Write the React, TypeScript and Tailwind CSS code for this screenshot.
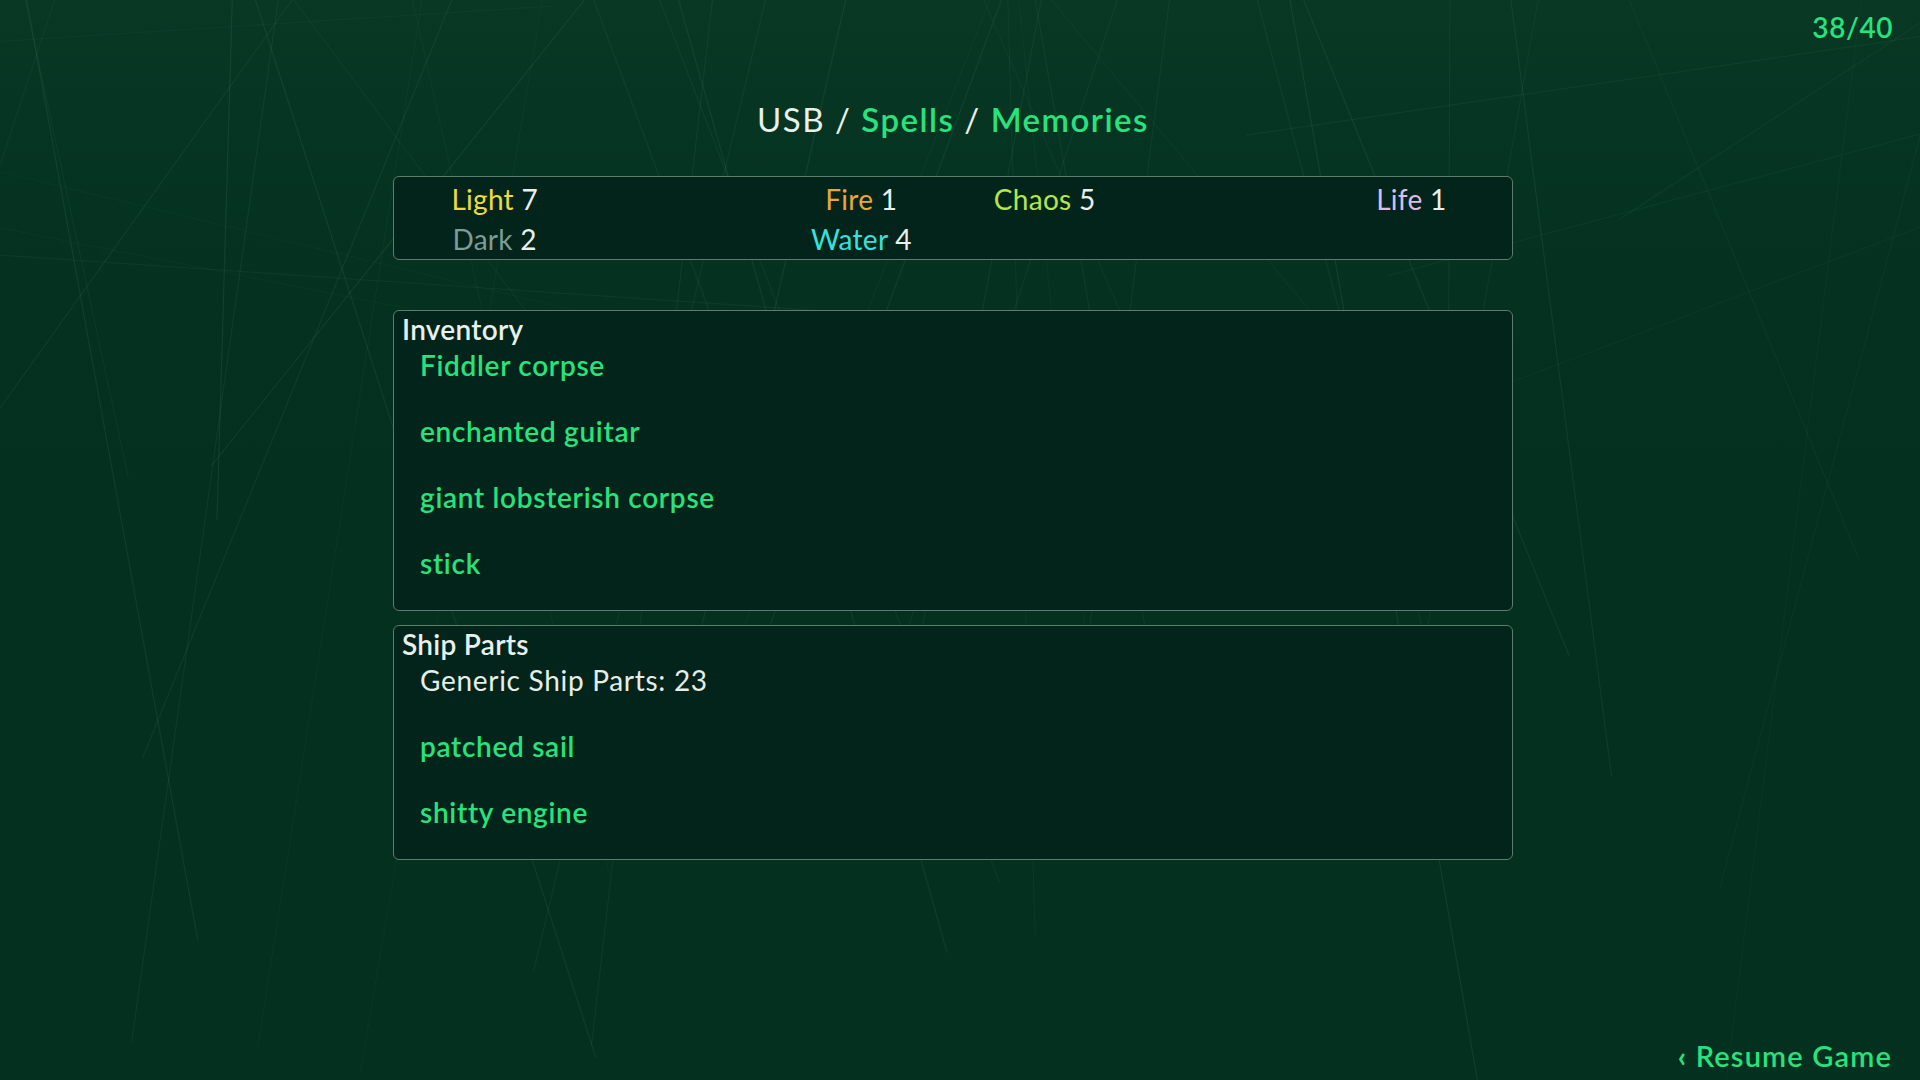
import React from "react";

// Faint thin strokes in the backdrop, generated from a fixed seed so they stay put.
function makeStrokes() {
  let s = 7654321;
  const rnd = () => {
    s = (s * 1103515245 + 12345) % 2147483648;
    return s / 2147483648;
  };
  const lines: { x1: number; y1: number; x2: number; y2: number; o: number }[] = [];
  for (let i = 0; i < 38; i++) {
    const x1 = rnd() * 2000 - 40;
    const y1 = -10;
    const x2 = x1 + (rnd() - 0.5) * 800;
    const y2 = 450 + rnd() * 650;
    lines.push({ x1, y1, x2, y2, o: 0.05 + rnd() * 0.07 });
  }
  for (let i = 0; i < 8; i++) {
    const y1 = rnd() * 300;
    const fromLeft = rnd() > 0.5;
    const x1 = fromLeft ? -20 : 1940;
    const x2 = fromLeft ? 400 + rnd() * 700 : 1100 + rnd() * 600;
    const y2 = y1 + (rnd() - 0.2) * 350;
    lines.push({ x1, y1, x2, y2, o: 0.04 + rnd() * 0.06 });
  }
  return lines;
}

const strokes = makeStrokes();

type Stat = { name: string; value: number; color: string } | null;

const statRows: Stat[][] = [
  [
    { name: "Light", value: 7, color: "text-[#eedc3c]" },
    null,
    { name: "Fire", value: 1, color: "text-[#e9a73a]" },
    { name: "Chaos", value: 5, color: "text-[#b5e64c]" },
    null,
    { name: "Life", value: 1, color: "text-[#dcbde6]" },
  ],
  [
    { name: "Dark", value: 2, color: "text-[#7e9c95]" },
    null,
    { name: "Water", value: 4, color: "text-[#34e2df]" },
    null,
    null,
    null,
  ],
];

function Panel({
  title,
  children,
}: {
  title: string;
  children: React.ReactNode;
}) {
  return (
    <section className="w-[1120px] rounded-[6px] border border-[#5d7c6c] bg-[#02241a] pb-[29px]">
      <h2 className="pl-[8px] text-[28px] leading-[36px] font-semibold tracking-[0.01em] text-[#e9f0eb]">
        {title}
      </h2>
      <ul className="flex flex-col gap-[30px] pl-[26px]">{children}</ul>
    </section>
  );
}

function Item({ children, plain }: { children: React.ReactNode; plain?: boolean }) {
  return (
    <li
      className={
        plain
          ? "text-[28px] leading-[36px] tracking-[0.025em] text-[#e6eee9]"
          : "text-[28px] leading-[36px] font-semibold tracking-[0.025em] text-[#26e37e]"
      }
    >
      {children}
    </li>
  );
}

export default function App() {
  return (
    <div
      className="relative flex h-[1080px] w-[1920px] flex-col overflow-hidden bg-[#04301f]"
      style={{ fontFamily: "Lato, 'Open Sans', sans-serif" }}
    >
      <svg
        className="pointer-events-none absolute inset-0"
        width="1920"
        height="1080"
        viewBox="0 0 1920 1080"
      >
        <defs>
          <linearGradient id="shade" x1="0" y1="0" x2="0" y2="1">
            <stop offset="0" stopColor="#0a3a26" stopOpacity="0.8" />
            <stop offset="0.5" stopColor="#04301f" stopOpacity="0" />
          </linearGradient>
        </defs>
        <rect x="0" y="0" width="1920" height="1080" fill="url(#shade)" />
        {strokes.map((l, i) => (
          <line
            key={i}
            x1={l.x1}
            y1={l.y1}
            x2={l.x2}
            y2={l.y2}
            stroke="#6fb08a"
            strokeOpacity={l.o}
            strokeWidth="1.2"
          />
        ))}
      </svg>

      {/* stamina counter */}
      <div className="relative flex justify-end pr-[27px] pt-[7px]">
        <span className="text-[28px] leading-[40px] font-semibold tracking-[0.02em] text-[#26e37e]">
          38/40
        </span>
      </div>

      <main className="relative flex flex-col items-center pr-[14px]">
        <h1 className="mt-[52px] text-[33px] leading-[40px] tracking-[0.045em] text-[#e9f0eb]">
          USB / <span className="font-semibold text-[#26e37e]">Spells</span> /{" "}
          <span className="font-semibold text-[#26e37e]">Memories</span>
        </h1>

        {/* element tallies */}
        <div className="mt-[37px] w-[1120px] rounded-[6px] border border-[#5d7c6c] bg-[#02241a] px-[9px] pt-[2px]">
          {statRows.map((row, r) => (
            <div key={r} className="grid grid-cols-6">
              {row.map((st, c) => (
                <div key={c} className="text-center text-[28px] leading-[40px] tracking-[0.01em]">
                  {st ? (
                    <>
                      <span className={st.color}>{st.name}</span>{" "}
                      <span className="text-[#e9f0eb]">{st.value}</span>
                    </>
                  ) : null}
                </div>
              ))}
            </div>
          ))}
        </div>

        <div className="mt-[50px]">
          <Panel title="Inventory">
            <Item>Fiddler corpse</Item>
            <Item>enchanted guitar</Item>
            <Item>giant lobsterish corpse</Item>
            <Item>stick</Item>
          </Panel>
        </div>

        <div className="mt-[14px]">
          <Panel title="Ship Parts">
            <Item plain>Generic Ship Parts: 23</Item>
            <Item>patched sail</Item>
            <Item>shitty engine</Item>
          </Panel>
        </div>
      </main>

      <div className="relative mt-auto flex justify-end pr-[28px] pb-[6px]">
        <button className="text-[29px] leading-[36px] font-semibold tracking-[0.04em] text-[#26e37e]">
          <span className="font-bold">&lsaquo;</span> Resume Game
        </button>
      </div>
    </div>
  );
}
